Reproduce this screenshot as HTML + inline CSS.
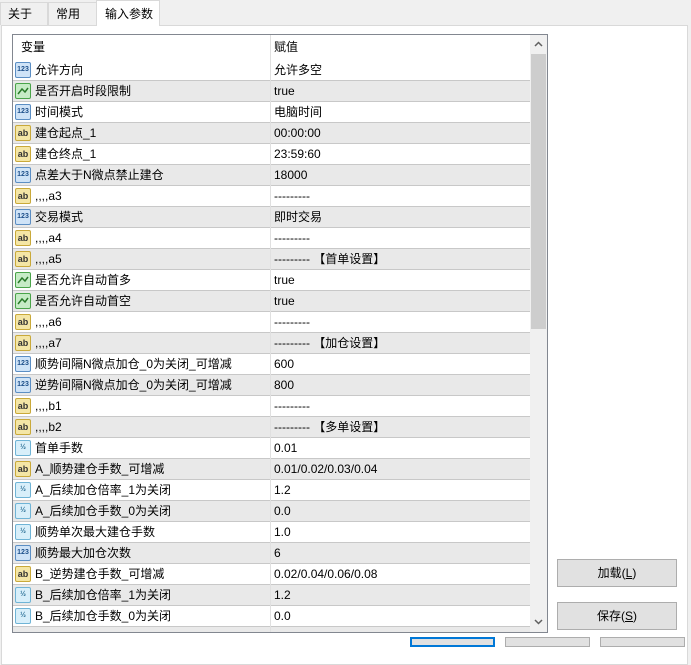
<!DOCTYPE html>
<html><head><meta charset="utf-8"><style>
*{margin:0;padding:0;box-sizing:border-box}
body{width:691px;height:643px;background:#f0f0f0;font-family:"Liberation Sans","Noto Sans CJK SC",sans-serif;font-size:12px;color:#000;position:relative;overflow:hidden}
.tab{position:absolute;top:2px;height:23px;border:1px solid #d9d9d9;border-bottom:none;background:#f0f0f0;line-height:22px;padding-left:7px}
.panel{position:absolute;left:1px;top:25px;width:687px;height:640px;background:#fff;border:1px solid #d9d9d9}
.tbl{position:absolute;left:12px;top:34px;width:536px;height:599px;border:1px solid #828790;background:#fff;overflow:hidden}
.row{position:absolute;left:0;width:517px;height:21px;border-bottom:1px solid #c8c8c8;line-height:20px}
.g{background:#e9e9e9}
.n{position:absolute;left:22px}
.v{position:absolute;left:261px}
.div{position:absolute;left:257px;top:0;width:1px;height:600px;background:#e0e0e0}
.ic{position:absolute;left:2px;top:2px;width:16px;height:16px;border-radius:2px;font-size:7px;font-weight:bold;text-align:center;line-height:14px;font-family:"Liberation Sans",sans-serif}
.i1{background:#cfe3f7;border:1px solid #5b8ec4;color:#1d4f8a}
.i2{background:#c6ebc6;border:1px solid #4aa44a}
.i3{background:#f4e6a6;border:1px solid #c9a93a;color:#333;font-size:9px}
.i4{background:#d8effa;border:1px solid #6fb4d6;color:#2a6f95}
.i0{display:none}
.sb{position:absolute;left:517px;top:0;width:17px;height:597px;background:#f0f0f0}
.th{position:absolute;left:1px;top:19px;width:15px;height:275px;background:#cdcdcd}
.btn{position:absolute;left:557px;width:120px;height:28px;background:#e1e1e1;border:1px solid #adadad;text-align:center;line-height:26px;font-size:12px}
</style></head><body>
<div class="panel"></div>
<div class="tab" style="left:0;width:48px">关于</div>
<div class="tab" style="left:48px;width:50px">常用</div>
<div class="tab" style="left:96px;top:0;height:26px;width:64px;background:#fff;line-height:26px;padding-left:8px">输入参数</div>
<div class="tbl">
<div class="row" style="top:0;height:25px;line-height:24px;border-bottom:none"><span style="position:absolute;left:8px">变量</span><span class="v">赋值</span></div>
<div id="rows"></div>
<div class="div"></div>
<div class="sb"><svg style="position:absolute;left:4px;top:6px" width="9" height="6"><path d="M1 5 L4.5 1.5 L8 5" stroke="#606060" stroke-width="1.5" fill="none"/></svg><div class="th"></div><svg style="position:absolute;left:4px;top:584px" width="9" height="6"><path d="M1 1 L4.5 4.5 L8 1" stroke="#606060" stroke-width="1.5" fill="none"/></svg></div>
</div>
<div class="btn" style="top:559px">加载(<u>L</u>)</div>
<div class="btn" style="top:602px">保存(<u>S</u>)</div>
<div style="position:absolute;left:410px;top:637px;width:85px;height:10px;border:2px solid #0078d7;background:#e1e1e1"></div>
<div style="position:absolute;left:505px;top:637px;width:85px;height:10px;border:1px solid #adadad;background:#e1e1e1"></div>
<div style="position:absolute;left:600px;top:637px;width:85px;height:10px;border:1px solid #adadad;background:#e1e1e1"></div>
<script>
var d=[[1,"允许方向","允许多空"],[2,"是否开启时段限制","true"],[1,"时间模式","电脑时间"],[3,"建仓起点_1","00:00:00"],[3,"建仓终点_1","23:59:60"],[1,"点差大于N微点禁止建仓","18000"],[3,",,,,a3","---------"],[1,"交易模式","即时交易"],[3,",,,,a4","---------"],[3,",,,,a5","--------- 【首单设置】"],[2,"是否允许自动首多","true"],[2,"是否允许自动首空","true"],[3,",,,,a6","---------"],[3,",,,,a7","--------- 【加仓设置】"],[1,"顺势间隔N微点加仓_0为关闭_可增减","600"],[1,"逆势间隔N微点加仓_0为关闭_可增减","800"],[3,",,,,b1","---------"],[3,",,,,b2","--------- 【多单设置】"],[4,"首单手数","0.01"],[3,"A_顺势建仓手数_可增减","0.01/0.02/0.03/0.04"],[4,"A_后续加仓倍率_1为关闭","1.2"],[4,"A_后续加仓手数_0为关闭","0.0"],[4,"顺势单次最大建仓手数","1.0"],[1,"顺势最大加仓次数","6"],[3,"B_逆势建仓手数_可增减","0.02/0.04/0.06/0.08"],[4,"B_后续加仓倍率_1为关闭","1.2"],[4,"B_后续加仓手数_0为关闭","0.0"],[0,"","" ]];
var t={0:"",1:"123",2:"",3:"ab",4:"½"};var h="";
d.forEach(function(r,i){h+='<div class="row'+(i%2?' g':'')+'" style="top:'+(25+21*i)+'px"><div class="ic i'+r[0]+'">'+(r[0]==2?'<svg width="14" height="14" viewBox="0 0 14 14"><path d="M2 10 L6 5 L9 8 L12 4" stroke="#2a7a2a" stroke-width="1.5" fill="none"/></svg>':t[r[0]])+'</div><span class="n">'+r[1]+'</span><span class="v">'+r[2]+'</span></div>'});
document.getElementById("rows").innerHTML=h;
</script>
</body></html>
